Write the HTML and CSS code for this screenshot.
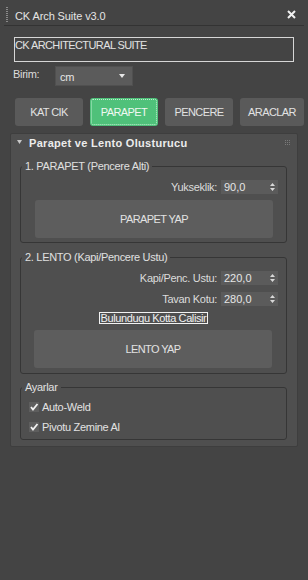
FILE: index.html
```html
<!DOCTYPE html>
<html>
<head>
<meta charset="utf-8">
<link rel="stylesheet" href="styles.css">
</head>
<body>
<div class="window">
  <div class="titlebar">
    <span class="grip"></span>
    <span class="title">CK Arch Suite v3.0</span>
    <svg class="close" width="9" height="9" viewBox="0 0 9 9"><path d="M1 1 L8 8 M8 1 L1 8" stroke="#f0f0f0" stroke-width="2" fill="none"/></svg>
  </div>

  <div class="textbox">CK ARCHITECTURAL SUITE</div>

  <div class="unit-row">
    <span class="unit-label">Birim:</span>
    <div class="dropdown">
      <span>cm</span>
      <svg width="6" height="4" viewBox="0 0 6 4"><path d="M0 0 H6 L3 4 Z" fill="#e8e8e8"/></svg>
    </div>
  </div>

  <div class="tabs">
    <div class="tab">KAT CIK</div>
    <div class="tab active">PARAPET</div>
    <div class="tab">PENCERE</div>
    <div class="tab last">ARACLAR</div>
  </div>

  <div class="rollout">
    <div class="rollout-head">
      <svg class="tri" width="5" height="4" viewBox="0 0 5 4"><path d="M0 0 H5 L2.5 4 Z" fill="#c8c8c8"/></svg>
      <span class="rollout-title">Parapet ve Lento Olusturucu</span>
      <svg class="dots" width="5" height="5" viewBox="0 0 5 5">
        <rect x="0" y="0" width="1" height="1" fill="#7a7a7a"/><rect x="2" y="0" width="1" height="1" fill="#7a7a7a"/><rect x="4" y="0" width="1" height="1" fill="#7a7a7a"/>
        <rect x="0" y="2" width="1" height="1" fill="#7a7a7a"/><rect x="2" y="2" width="1" height="1" fill="#7a7a7a"/><rect x="4" y="2" width="1" height="1" fill="#7a7a7a"/>
        <rect x="0" y="4" width="1" height="1" fill="#7a7a7a"/><rect x="2" y="4" width="1" height="1" fill="#7a7a7a"/><rect x="4" y="4" width="1" height="1" fill="#7a7a7a"/>
      </svg>
    </div>

    <fieldset class="group g1">
      <legend>1. PARAPET (Pencere Alti)</legend>
      <div class="spin-row first">
        <span class="spin-label">Yukseklik:</span>
        <div class="spinner"><span>90,0</span><svg width="5" height="8" viewBox="0 0 5 8"><path d="M0 3 L2.5 0 L5 3 Z M0 5 L2.5 8 L5 5 Z" fill="#d8d8d8"/></svg></div>
      </div>
      <div class="big-btn b1">PARAPET YAP</div>
    </fieldset>

    <fieldset class="group g2">
      <legend>2. LENTO (Kapi/Pencere Ustu)</legend>
      <div class="spin-row first">
        <span class="spin-label">Kapi/Penc. Ustu:</span>
        <div class="spinner"><span>220,0</span><svg width="5" height="8" viewBox="0 0 5 8"><path d="M0 3 L2.5 0 L5 3 Z M0 5 L2.5 8 L5 5 Z" fill="#d8d8d8"/></svg></div>
      </div>
      <div class="spin-row second">
        <span class="spin-label">Tavan Kotu:</span>
        <div class="spinner"><span>280,0</span><svg width="5" height="8" viewBox="0 0 5 8"><path d="M0 3 L2.5 0 L5 3 Z M0 5 L2.5 8 L5 5 Z" fill="#d8d8d8"/></svg></div>
      </div>
      <div class="note-row"><span class="note">Bulunduqu Kotta Calisir</span></div>
      <div class="big-btn b2">LENTO YAP</div>
    </fieldset>

    <fieldset class="group g3">
      <legend>Ayarlar</legend>
      <label class="check-row first">
        <span class="check"><svg width="10" height="10" viewBox="0 0 10 10"><path d="M2 5 L4 7.5 L8.5 2" stroke="#f2f2f2" stroke-width="1.8" fill="none"/></svg></span>
        <span>Auto-Weld</span>
      </label>
      <label class="check-row second">
        <span class="check"><svg width="10" height="10" viewBox="0 0 10 10"><path d="M2 5 L4 7.5 L8.5 2" stroke="#f2f2f2" stroke-width="1.8" fill="none"/></svg></span>
        <span>Pivotu Zemine Al</span>
      </label>
    </fieldset>
  </div>
</div>
</body>
</html>
```

FILE: styles.css
```css
* { box-sizing: border-box; }

html, body {
  margin: 0;
  padding: 0;
  background: #444444;
}

body {
  width: 308px;
  height: 580px;
  overflow: hidden;
  font-family: "Liberation Sans", Arial, sans-serif;
  font-size: 11px;
  line-height: 14px;
  color: #dcdcdc;
  letter-spacing: -0.3px;
}

.window {
  width: 308px;
  overflow: hidden;
}

.titlebar {
  display: flex;
  align-items: center;
  height: 26px;
  margin: 0 4px;
  padding: 6px 8px 0 2px;
  border-bottom: 1px solid #333333;
}

.grip {
  width: 2px;
  height: 16px;
  background-image: linear-gradient(#8a8a8a 50%, transparent 50%);
  background-size: 2px 2px;
  margin-top: -2px;
}

.title {
  margin-left: 7px;
  flex: 1;
  color: #e4e4e4;
  letter-spacing: -0.1px;
}

.close {
  display: block;
  margin-top: -3px;
}

.textbox {
  margin: 11px 14px 0 14px;
  height: 25px;
  border: 1px solid #d6d6d6;
  padding: 0;
  color: #e2e2e2;
  letter-spacing: -0.6px;
}

.unit-row {
  display: flex;
  margin-top: 4px;
  padding-left: 13px;
  height: 20px;
}

.unit-label {
  width: 42px;
  margin-top: 1px;
}

.dropdown {
  width: 78px;
  height: 20px;
  background: #5b5b5b;
  border: 1px solid #505050;
  display: flex;
  align-items: center;
  justify-content: space-between;
  padding: 1px 7px 0 4px;
  color: #e6e6e6;
}

.dropdown svg { display: block; margin-top: -1px; }

.tabs {
  display: flex;
  gap: 7px;
  margin-top: 12px;
  padding-left: 15px;
}

.tab {
  flex: none;
  width: 68px;
  height: 28px;
  border-radius: 3px;
  background: #5a5a5a;
  display: flex;
  align-items: center;
  justify-content: center;
  letter-spacing: -0.6px;
  color: #e2e2e2;
}

.tab.last { width: 64px; }

.tab.active {
  background: #4fc17a;
  outline: 1px dotted rgba(225, 255, 235, 0.75);
  outline-offset: -2px;
  color: #f0f8f2;
}

.rollout {
  margin: 7px 10px 0 10px;
  background: #4f4f4f;
  border: 1px solid #3e3e3e;
  border-radius: 2px;
  padding-bottom: 6px;
}

.rollout-head {
  display: flex;
  align-items: flex-start;
  height: 26px;
  padding: 2px 0 0 6px;
}

.tri {
  display: block;
  margin-top: 4px;
}

.rollout-title {
  margin-left: 7px;
  flex: 1;
  font-weight: bold;
  letter-spacing: 0.3px;
  color: #ececec;
}

.dots {
  display: block;
  margin: 4px 7px 0 0;
}

.group {
  margin: 0 10px 0 9px;
  padding: 0 0 5px 0;
  border: 1px solid #363636;
  border-radius: 3px;
  min-width: 0;
}

.group legend {
  margin-left: 1px;
  padding: 0 3px;
  line-height: 13px;
  color: #e0e0e0;
}

.g1 { padding-bottom: 4px; }
.g2 { margin-top: 8px; }
.g3 { margin-top: 7px; padding-bottom: 5px; }

.spin-row {
  display: flex;
  justify-content: flex-end;
  align-items: center;
  gap: 4px;
  height: 14px;
  padding-right: 8px;
}

.spin-row.first { margin-top: 7px; }
.spin-row.second { margin-top: 7px; }

.spinner {
  width: 57px;
  height: 14px;
  background: #5b5b5b;
  display: flex;
  align-items: center;
  justify-content: space-between;
  padding: 0 3px 0 3px;
  color: #e6e6e6;
  letter-spacing: 0;
}

.spinner svg { display: block; }

.big-btn {
  height: 38px;
  border-radius: 3px;
  background: #5d5d5d;
  display: flex;
  align-items: center;
  justify-content: center;
  letter-spacing: -0.6px;
  color: #e2e2e2;
}

.b1 { margin: 6px 13px 0 14px; }
.b2 { margin: 6px 14px 0 13px; }

.note-row {
  display: flex;
  justify-content: center;
  margin-top: 6px;
}

.note {
  height: 12px;
  line-height: 11px;
  border: 1px solid #f2f2f2;
  padding: 0 1px;
  color: #f0f0f0;
  letter-spacing: -0.4px;
}

.check-row {
  display: flex;
  align-items: center;
  gap: 3px;
  height: 14px;
  padding-left: 8px;
  color: #e2e2e2;
}

.check-row.first { margin-top: 6px; }
.check-row.second { margin-top: 6px; }

.check {
  width: 10px;
  height: 10px;
  background: #5e5e5e;
  display: block;
}

.check svg { display: block; }
```
